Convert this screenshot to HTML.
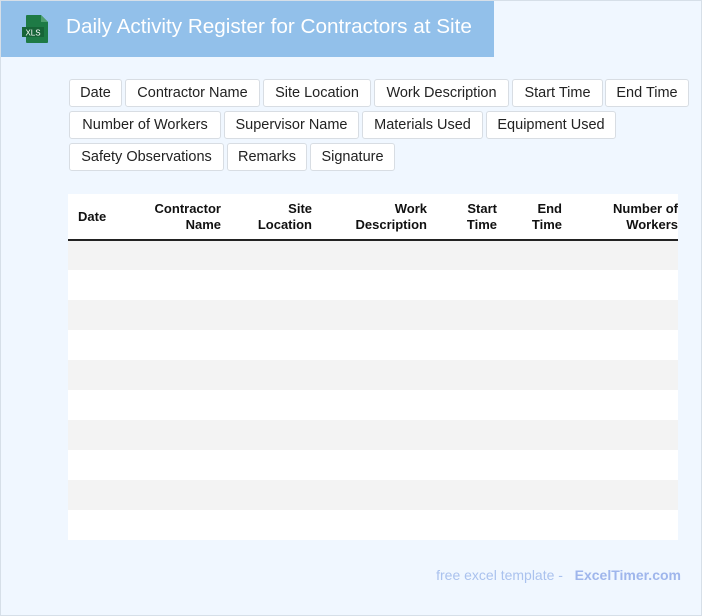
<!DOCTYPE html><html><head><style>
*{box-sizing:border-box;margin:0;padding:0}
body{width:702px;height:616px;background:#f0f7ff;font-family:"Liberation Sans",sans-serif;position:relative;overflow:hidden}
.bd{position:absolute;left:0;top:0;width:702px;height:616px;border:1px solid #d6dfe8;pointer-events:none}
.hdr{position:absolute;left:0;top:0;width:494px;height:57px;background:#92c0ea}
.hdr h1{position:absolute;left:66px;top:15px;font-size:20.7px;font-weight:normal;color:#fff;white-space:nowrap}
.chip{position:absolute;height:28px;background:#fff;border:1px solid #d8dde3;border-radius:3px;font-size:14.5px;color:#222;line-height:26px;text-align:center}
table{position:absolute;left:68px;top:194px;width:610px;border-collapse:collapse;font-size:13px}
th{height:46px;font-weight:bold;text-align:right;vertical-align:middle;line-height:16px;border-bottom:2px solid #222;background:#fff;color:#111;padding:0}
td{height:30px;padding:0}
tr:nth-child(even) td{background:#f3f3f3}
tr:nth-child(odd) td{background:#fff}
.ft{position:absolute;right:21px;top:567px;font-size:14px;color:#aac2ee}
</style></head><body>
<div class="hdr">
<svg style="position:absolute;left:21px;top:14px" width="30" height="30" viewBox="0 0 30 30"><path d="M6 1h14l7 7v20a1 1 0 0 1-1 1H6a1 1 0 0 1-1-1V2a1 1 0 0 1 1-1z" fill="#1e7a45"/><path d="M20 1v7h7z" fill="#4fa06f"/><rect x="1" y="13" width="22" height="10" fill="#176437"/><text x="12" y="21.5" font-size="8" fill="#fff" text-anchor="middle" font-family="Liberation Sans">XLS</text></svg>
<h1>Daily Activity Register for Contractors at Site</h1></div>
<div class="chip" style="left:69px;top:79px;width:53px">Date</div>
<div class="chip" style="left:125px;top:79px;width:135px">Contractor Name</div>
<div class="chip" style="left:263px;top:79px;width:108px">Site Location</div>
<div class="chip" style="left:374px;top:79px;width:135px">Work Description</div>
<div class="chip" style="left:512px;top:79px;width:91px">Start Time</div>
<div class="chip" style="left:605px;top:79px;width:84px">End Time</div>
<div class="chip" style="left:69px;top:111px;width:152px">Number of Workers</div>
<div class="chip" style="left:224px;top:111px;width:135px">Supervisor Name</div>
<div class="chip" style="left:362px;top:111px;width:121px">Materials Used</div>
<div class="chip" style="left:486px;top:111px;width:130px">Equipment Used</div>
<div class="chip" style="left:69px;top:143px;width:155px">Safety Observations</div>
<div class="chip" style="left:227px;top:143px;width:80px">Remarks</div>
<div class="chip" style="left:310px;top:143px;width:85px">Signature</div>
<table>
<tr><th style="width:65px;text-align:left;padding-left:10px">Date</th><th style="width:88px">Contractor<br>Name</th><th style="width:91px">Site<br>Location</th><th style="width:115px">Work<br>Description</th><th style="width:70px">Start<br>Time</th><th style="width:65px">End<br>Time</th><th style="width:116px">Number of<br>Workers</th></tr>
<tr><td colspan="7"></td></tr><tr><td colspan="7"></td></tr><tr><td colspan="7"></td></tr><tr><td colspan="7"></td></tr><tr><td colspan="7"></td></tr><tr><td colspan="7"></td></tr><tr><td colspan="7"></td></tr><tr><td colspan="7"></td></tr><tr><td colspan="7"></td></tr><tr><td colspan="7"></td></tr>
</table>
<div class="ft">free excel template - &nbsp;&nbsp;<b style="color:#9fb6ec">ExcelTimer.com</b></div>
<div class="bd"></div>
</body></html>
